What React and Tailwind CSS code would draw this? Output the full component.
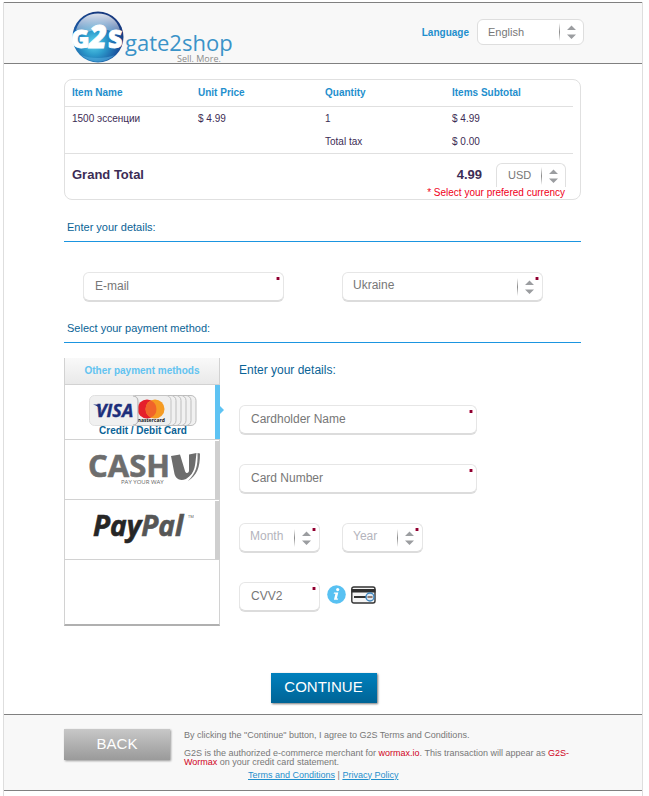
import React, { useState } from 'react';

/* Small red marker in the corner of every required field */
function RequiredMark() {
  return (
    <svg className="absolute top-[5px] right-1 pointer-events-none" width="4" height="3" viewBox="0 0 4 3" aria-hidden="true">
      <rect width="4" height="3" fill="#d98ba3" />
      <rect x="1" width="2" height="3" fill="#8c0030" />
    </svg>
  );
}

function Arrows({ className = '' }) {
  return (
    <svg className={`absolute pointer-events-none ${className}`} width="18" height="18" viewBox="0 0 18 18" aria-hidden="true">
      <defs>
        <linearGradient id="sep" x1="0" y1="0" x2="0" y2="1">
          <stop offset="0" stopColor="#fff" />
          <stop offset="0.5" stopColor="#8a8a8a" />
          <stop offset="1" stopColor="#fff" />
        </linearGradient>
      </defs>
      <rect x="0" y="0" width="1" height="18" fill="url(#sep)" />
      <path d="M8 7h9L12.500 2.500zM8 11.500h9l-4.500 4.500z" fill="#9b9da0" />
    </svg>
  );
}

function TextField({ id, label, required = true }) {
  return (
    <div className="relative w-full">
      <input
        id={id}
        type="text"
        aria-label={label}
        placeholder={label}
        className="block w-full h-[29px] mb-px px-[11px] rounded-md border border-[#e6e6e6] border-b-[#dcdcdc] bg-white text-[12px] text-[#666] placeholder:text-[#777] shadow-[0_1px_0_#dcdcdc] outline-none"
      />
      {required && <RequiredMark />}
    </div>
  );
}

function SelectField({ id, label, options, muted = false, required = true }) {
  return (
    <div className="relative w-full">
      <select
        id={id}
        aria-label={label}
        className={`appearance-none block w-full h-[29px] mb-px pl-2.5 pr-7 pb-0.5 rounded-md border border-[#e6e6e6] border-b-[#dcdcdc] bg-white text-[12px] shadow-[0_1px_0_#dcdcdc] outline-none ${muted ? 'text-[#b4b4bc]' : 'text-[#777]'}`}
      >
        {options.map((o) => <option key={o}>{o}</option>)}
      </select>
      <Arrows className="top-[6px] right-2" />
      {required && <RequiredMark />}
    </div>
  );
}

function Gate2ShopLogo() {
  return (
    <svg width="162" height="54" viewBox="0 0 162 54" role="img" aria-label="gate2shop">
      <defs>
        <radialGradient id="ball" cx="0.42" cy="0.62" r="0.6">
          <stop offset="0" stopColor="#5ed6ee" />
          <stop offset="0.4" stopColor="#2c9acb" />
          <stop offset="0.8" stopColor="#1a55a0" />
          <stop offset="1" stopColor="#173a80" />
        </radialGradient>
        <linearGradient id="gloss" x1="0" y1="0" x2="0" y2="1">
          <stop offset="0" stopColor="#fff" stopOpacity="0.85" />
          <stop offset="1" stopColor="#fff" stopOpacity="0.3" />
        </linearGradient>
      </defs>
      <circle cx="27" cy="27" r="25.500" fill="url(#ball)" />
      <path d="M5 20C8 9 17 3.500 27 3.500S46 9 49 20C42 25 36 17 27 19S11 25 5 20z" fill="url(#gloss)" />
      <path d="M10 45c9 4 24 4 34 0-5 4-10 6.500-17 6.500S15 49 10 45z" fill="#5ab6e6" opacity="0.5" />
      <g fill="#fff" stroke="#fff" strokeWidth="0.8" fontFamily="Open Sans, sans-serif" fontWeight="800">
        <text x="0" y="38" fontSize="25">G</text>
        <text x="18" y="38" fontSize="31" fontStyle="italic">2</text>
        <text x="37" y="38" fontSize="25">S</text>
      </g>
      <text x="54" y="41" fontFamily="Open Sans, sans-serif" fontSize="22" fill="#3a93c8">gate2shop</text>
      <text x="106" y="52" fontFamily="Open Sans, sans-serif" fontSize="9" fill="#8b8b8b">Sell. More.</text>
    </svg>
  );
}

function CardsLogo() {
  return (
    <svg width="109" height="31" viewBox="0 0 109 31" aria-hidden="true">
      {[51, 46, 41, 36, 31].map((x) => (
        <rect key={x} x={x} y="0.5" width="56" height="30" rx="5" fill="#f1f1f1" stroke="#bdbdbd" />
      ))}
      <rect x="28" y="0.5" width="54" height="30" rx="5" fill="#efefef" stroke="#c4c4c4" />
      <circle cx="58" cy="14" r="9.500" fill="#e5202b" />
      <circle cx="66" cy="14" r="9.500" fill="#f59b23" />
      <path d="M62 5.400a9.500 9.500 0 0 1 0 17.200 9.500 9.500 0 0 1 0-17.200z" fill="#f0642a" />
      <text x="47" y="27" fontFamily="Open Sans, sans-serif" fontSize="5" fontWeight="700" fill="#222">mastercard</text>
      <rect x="0.5" y="0.5" width="48" height="30" rx="5" fill="#f0f0f0" stroke="#e0e0e0" />
      <path d="M44 1c3 0 5 2 5 5v19c0 3-2 5-5 5" fill="none" stroke="#b5b5b5" />
      <text x="7" y="22" fontFamily="Open Sans, sans-serif" fontSize="18" fontWeight="700" fontStyle="italic" fill="#1d2f7c" stroke="#1d2f7c" strokeWidth="0.4">VISA</text>
      <path d="M4 9.500h6l3 7C11 13 8 10.500 4 9.500z" fill="#1d2f7c" />
    </svg>
  );
}

function CashULogo() {
  return (
    <svg width="113" height="32" viewBox="0 0 113 32" role="img" aria-label="CashU">
      <text x="1" y="24" fontFamily="Open Sans, sans-serif" fontSize="31" fontWeight="700" fill="#6d6d6d" stroke="#6d6d6d" strokeWidth="0.6">CASH</text>
      <path d="M84 3l9-1.500 5 16.500c.8 3 4 2.500 4-.5V1.500L109.500 0C108 11 109 20 99 26c-6 2.500-10 0-11.500-5z" fill="#6d6d6d" />
      <path d="M110.500 0l2.500.5c0 14-3 22-12 27.500 8-8 10-15 9.500-28z" fill="#777" />
      <text x="34" y="31" fontFamily="Open Sans, sans-serif" fontSize="6" fill="#666">PAY YOUR WAY</text>
    </svg>
  );
}

function PayPalLogo() {
  return (
    <svg width="102" height="36" viewBox="0 0 102 36" role="img" aria-label="PayPal">
      <text x="1" y="25" fontFamily="Open Sans, sans-serif" fontSize="28" fontWeight="700" fontStyle="italic" fill="#262626" stroke="#262626" strokeWidth="0.6">
        Pay<tspan fill="#565656" stroke="#565656">Pal</tspan>
      </text>
      <text x="96" y="7" fontFamily="Open Sans, sans-serif" fontSize="4" fill="#565656">TM</text>
    </svg>
  );
}

function InfoIcon() {
  return (
    <svg width="19" height="19" viewBox="0 0 19 19" aria-hidden="true">
      <circle cx="9.500" cy="9.500" r="9.300" fill="#58c1f2" />
      <circle cx="10.700" cy="4.600" r="1.600" fill="#fff" />
      <path d="M7 7.500h4.300L9.800 13.500h1.400l-.4 1.300H6.900l1.500-6H6.700z" fill="#fff" />
    </svg>
  );
}

function CardBackIcon() {
  return (
    <svg width="25" height="18" viewBox="0 0 25 18" role="img" aria-label="Security code on the back of the card">
      <rect x="0.800" y="1" width="23.200" height="16" rx="2" fill="#f5f5f5" stroke="#333" strokeWidth="1.400" />
      <rect x="0.500" y="3" width="24" height="3.500" fill="#2f2f2f" />
      <path d="M3 11h12" stroke="#333" strokeWidth="2" />
      <circle cx="19" cy="11" r="4" fill="#dfeaf3" stroke="#3f85bd" strokeWidth="1.400" />
      <path d="M16.500 11h5" stroke="#7b5a4a" strokeWidth="1.500" />
    </svg>
  );
}

const METHODS = [
  { id: 'card', logo: <CardsLogo />, label: 'Credit / Debit Card' },
  { id: 'cashu', logo: <CashULogo /> },
  { id: 'paypal', logo: <PayPalLogo /> },
];

function PaymentMethods({ selected, onSelect }) {
  return (
    <aside className="w-[156px] shrink-0 min-h-[268px] border-x border-b-2 border-x-[#d2d2d2] border-b-[#b0b0b0]">
      <h3 className="h-[27px] pt-px border-b border-[#d2d2d2] bg-linear-to-b from-[#f9f9f9] to-[#e9e9e9] text-center text-[10px] leading-6 font-bold text-[#62c3f0]">
        Other payment methods
      </h3>
      <ul>
        {METHODS.map(({ id, logo, label }) => {
          const active = id === selected;
          return (
            <li key={id} className="relative border-b border-[#d2d2d2]">
              <button
                type="button"
                onClick={() => onSelect(id)}
                className={`flex w-full flex-col items-center pl-0.5 ${label ? 'h-[54px] pt-2.5' : 'h-[59px] justify-center'}`}
              >
                {logo}
                {label && <span className="text-[10px] leading-[10px] font-bold text-[#0a6396]">{label}</span>}
              </button>
              <span className={`absolute bottom-0 -right-px w-[5px] ${active ? 'top-0 bg-[#5ec3f3]' : 'top-px bg-[#cfcfcf]'}`} />
              {active && (
                <svg className="absolute top-5 -right-[5px]" width="5" height="10" viewBox="0 0 5 10" aria-hidden="true">
                  <path d="M0 0l5 5-5 5z" fill="#5ec3f3" />
                </svg>
              )}
            </li>
          );
        })}
      </ul>
    </aside>
  );
}

function OrderSummary() {
  return (
    <section className="rounded-lg border border-[#e0e0e0] pr-[7px] text-[10px] text-[#3c2c55]">
      <table className="w-full table-fixed border-collapse text-left">
        <thead>
          <tr className="h-[26px] border-b border-[#e0e0e0] text-[#1f8fcd]">
            <th className="pl-[7px]">Item Name</th>
            <th className="pl-1.5">Unit Price</th>
            <th className="pl-1.5">Quantity</th>
            <th className="pl-1.5">Items Subtotal</th>
          </tr>
        </thead>
        <tbody>
          <tr className="h-6">
            <td className="pl-[7px]">1500 эссенции</td>
            <td className="pl-1.5">$ 4.99</td>
            <td className="pl-1.5">1</td>
            <td className="pl-1.5">$ 4.99</td>
          </tr>
          <tr className="h-[23px] border-b border-[#e0e0e0]">
            <td />
            <td />
            <td className="pl-1.5">Total tax</td>
            <td className="pl-1.5">$ 0.00</td>
          </tr>
        </tbody>
      </table>
      <div className="flex items-center pl-[7px] pr-[7px] pt-[9px] text-[13px] font-bold">
        <span>Grand Total</span>
        <span className="ml-auto mr-3.5">4.99</span>
        <div className="relative w-[70px]">
          <select id="currency" aria-label="Currency" className="appearance-none block w-full h-6 pl-[11px] rounded-t-md border border-b-0 border-[#e0e0e0] bg-white text-[11px] font-normal text-[#777] outline-none">
            <option>USD</option>
          </select>
          <Arrows className="top-1 right-[7px]" />
        </div>
      </div>
      <p className="pr-2 text-right leading-3 text-[#f00019]">* Select your prefered currency</p>
    </section>
  );
}

export default function App() {
  const [method, setMethod] = useState('card');

  return (
    <div className="min-h-screen bg-white pt-0.5 pl-[3px] pr-1.5 font-['Liberation_Sans',Arial,sans-serif]">
      <div className="min-h-[794px] border-x border-[#dedede]">

        {/* Header */}
        <header className="flex h-[62px] items-start justify-between border-y border-[#808080] bg-[#f8f8f8] pl-[67px] pr-[58px]">
          <div className="pt-[7px]"><Gate2ShopLogo /></div>
          <div className="flex items-center gap-2 pt-4">
            <label htmlFor="language" className="text-[10px] font-bold text-[#1f8fcd]">Language</label>
            <div className="relative w-[107px]">
              <select id="language" className="appearance-none block w-full h-[26px] pl-2.5 rounded-md border border-[#dedede] bg-white text-[11px] text-[#777] outline-none">
                <option>English</option>
              </select>
              <Arrows className="top-1 right-[7px]" />
            </div>
          </div>
        </header>

        <main className="pl-[60px] pr-[61px] pt-[15px]">
          <OrderSummary />

          <h2 className="mt-[17px] border-b border-[#1b95e0] pl-[3px] pb-1 text-[11px] leading-5 text-[#0a6396]">Enter your details:</h2>
          <div className="flex gap-[58px] px-[19px] pt-[30px]">
            <div className="w-[201px]"><TextField id="email" label="E-mail" /></div>
            <div className="w-[201px]"><SelectField id="country" label="Country" options={['Ukraine']} /></div>
          </div>

          <h2 className="mt-4 border-b border-[#1b95e0] pl-[3px] pb-1 text-[11px] leading-5 text-[#0a6396]">Select your payment method:</h2>

          <div className="flex gap-[19px] pt-[15px]">
            <PaymentMethods selected={method} onSelect={setMethod} />
            <section className="w-[238px]">
              <h3 className="pt-0.5 text-[12px] leading-5 text-[#0a6396]">Enter your details:</h3>
              <div className="mt-[25px] flex flex-col gap-[29px]">
                <TextField id="holder" label="Cardholder Name" />
                <TextField id="number" label="Card Number" />
                <div className="flex gap-[22px]">
                  <div className="w-[81px]"><SelectField id="month" label="Month" options={['Month']} muted /></div>
                  <div className="w-[81px]"><SelectField id="year" label="Year" options={['Year']} muted /></div>
                </div>
                <div className="flex items-start">
                  <div className="w-[81px]"><TextField id="cvv" label="CVV2" /></div>
                  <button type="button" aria-label="What is CVV2?" className="ml-[7px] pt-[3px]"><InfoIcon /></button>
                  <div className="ml-[5px] pt-1"><CardBackIcon /></div>
                </div>
              </div>
            </section>
          </div>

          <div className="flex justify-center pl-0.5 pt-[47px] pb-[11px]">
            <button type="submit" className="h-[30px] w-[106px] bg-linear-to-b from-[#0080bd] to-[#006496] text-[15px] text-white shadow-[1px_1px_2px_#777]">CONTINUE</button>
          </div>
        </main>

        {/* Footer */}
        <footer className="flex h-[77px] items-start border-y border-[#808080] bg-[#f8f8f8] pl-[60px] pr-[60px] pt-3.5">
          <button type="button" className="h-[31px] w-[106px] shrink-0 bg-linear-to-b from-[#c8c8c8] to-[#9a9a9a] text-[15px] text-white shadow-[1px_1px_2px_#999]">BACK</button>
          <div className="ml-3.5 flex-1 text-[9px] leading-[9px] text-[#777]">
            <p className="pt-0.5">By clicking the &quot;Continue&quot; button, I agree to G2S Terms and Conditions.</p>
            <p className="pt-[9px]">
              G2S is the authorized e-commerce merchant for <span className="text-[#d0021b]">wormax.io</span>. This transaction will appear as <span className="text-[#d0021b]">G2S-Wormax</span> on your credit card statement.
            </p>
            <p className="pt-1 pl-16">
              <a href="#terms" className="text-[#1f8fcd] underline">Terms and Conditions</a>
              {' | '}
              <a href="#privacy" className="text-[#1f8fcd] underline">Privacy Policy</a>
            </p>
          </div>
        </footer>

      </div>
    </div>
  );
}
